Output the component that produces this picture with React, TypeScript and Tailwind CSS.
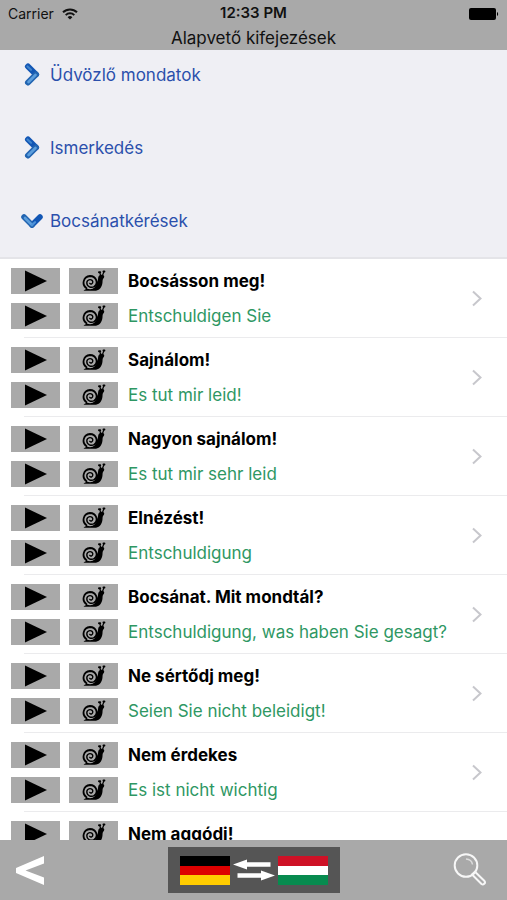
import React, { useState } from 'react';

interface Phrase {
    source: string;
    target: string;
}

interface Section {
    title: string;
    phrases: Phrase[];
}

const SECTIONS: Section[] = [
    { title: 'Üdvözlő mondatok', phrases: [] },
    { title: 'Ismerkedés', phrases: [] },
    {
        title: 'Bocsánatkérések',
        phrases: [
            { source: 'Bocsásson meg!', target: 'Entschuldigen Sie' },
            { source: 'Sajnálom!', target: 'Es tut mir leid!' },
            { source: 'Nagyon sajnálom!', target: 'Es tut mir sehr leid' },
            { source: 'Elnézést!', target: 'Entschuldigung' },
            { source: 'Bocsánat. Mit mondtál?', target: 'Entschuldigung, was haben Sie gesagt?' },
            { source: 'Ne sértődj meg!', target: 'Seien Sie nicht beleidigt!' },
            { source: 'Nem érdekes', target: 'Es ist nicht wichtig' },
            { source: 'Nem aggódj!', target: '' },
        ],
    },
];

const WifiIcon = () => (
    <svg width="16" height="12" viewBox="0 0 16 12" fill="none" stroke="#111" strokeWidth="2" aria-hidden="true">
        <path d="M1 4.3a10 10 0 0 1 14 0" />
        <path d="M3.7 7.1a6.2 6.2 0 0 1 8.6 0" />
        <path d="M8 11.6L5.6 9.2a3.4 3.4 0 0 1 4.8 0z" fill="#111" stroke="none" />
    </svg>
);

const BatteryIcon = () => (
    <svg width="30" height="12" viewBox="0 0 30 12" aria-hidden="true">
        <rect x="0" y="0" width="27" height="12" rx="2" />
        <path d="M28 4a2.3 2.3 0 0 1 0 4z" />
    </svg>
);

const SectionArrow = ({ open }: { open: boolean }) => (
    <svg width="24" height="24" viewBox="0 0 24 24" fill="none" strokeLinecap="round" aria-hidden="true">
        {open ? (
            <>
                <path d="M20 8L12 16" stroke="#1256b4" strokeWidth="5.5" />
                <path d="M4 8l8 8" stroke="#2264b0" strokeWidth="5.5" />
                <path d="M5 9l7 7" stroke="#5c9edc" strokeWidth="2.6" />
                <path d="M12 16l3-2.8" stroke="#4d92d8" strokeWidth="2.2" />
            </>
        ) : (
            <>
                <path d="M8 3.500l8 8" stroke="#1256b4" strokeWidth="6" />
                <path d="M16 11.500l-8 8" stroke="#2264b0" strokeWidth="6" />
                <path d="M7.500 3.500l3.500 3.200" stroke="#3f84cc" strokeWidth="2.2" />
                <path d="M15.500 12l-7 7" stroke="#5c9edc" strokeWidth="2.6" />
            </>
        )}
    </svg>
);

const SnailIcon = () => (
    <svg width="24" height="22" viewBox="0 0 24 22" fill="none" stroke="#000" strokeLinecap="round" aria-hidden="true">
        {/* body */}
        <path
            d="M1.500 20.800c1.500-1.600 3.500-2 6-2.200L13 14c1.800-1.200 2.700-2.600 3-4.800.2-1.800.4-3.300 1.600-4 1.300-.7 3.600-.5 4.400.6.700 1.200-.3 2.200-1 3.200-.7 1.300-.2 3-.8 5.200-.8 3.700-3.400 6.600-7.700 6.600z"
            fill="#000"
            stroke="none"
        />
        {/* horns */}
        <path d="M18.600 5.500l-.8-3M20.500 5.500l1.200-3.300" strokeWidth="1.200" />
        <path d="M17 2.200h1.200M21.500 1.600h.9" strokeWidth="2" />
        {/* shell */}
        <circle cx="8" cy="12.500" r="6.800" fill="#a9a9a9" stroke="none" />
        <path d="M4.500 18.200C-.5 15 1 6.500 8 6c6.500 0 8.500 7.500 4.500 10.500" strokeWidth="1.800" />
        <path d="M12.500 16.500c-3.500 2-7.700 0-7.700-3.800.2-3.600 5.700-4.300 6-.8.1 1.900-2 2.700-3 1.500" strokeWidth="1.400" />
    </svg>
);

const AudioButtons = ({ text, lang }: { text: string; lang: string }) => (
    <div className="flex gap-[9px]">
        <button
            type="button"
            lang={lang}
            aria-label={`Lejátszás: ${text}`}
            className="flex h-[26px] w-[49px] items-center justify-center bg-[#a9a9a9]"
        >
            <svg width="22" height="22" viewBox="0 0 22 22" aria-hidden="true">
                <path d="M0 .5L22 11 0 21.500z" />
            </svg>
        </button>
        <button
            type="button"
            lang={lang}
            aria-label={`Lassú lejátszás: ${text}`}
            className="flex h-[26px] w-[49px] items-center justify-center bg-[#a9a9a9]"
        >
            <SnailIcon />
        </button>
    </div>
);

const PhraseRow = ({ phrase }: { phrase: Phrase }) => (
    <li className="flex shrink-0 flex-col">
        <div className="flex items-center pt-[9px] pr-6 pb-2 pl-[11px]">
            <div className="flex min-w-0 flex-1 flex-col gap-[9px]">
                <div className="flex items-center gap-[10px]">
                    <AudioButtons text={phrase.source} lang="hu" />
                    <span className="text-[17px] leading-[26px] font-bold whitespace-nowrap text-black">{phrase.source}</span>
                </div>
                <div className="flex items-center gap-[10px]">
                    <AudioButtons text={phrase.target} lang="de" />
                    <span className="text-[17px] leading-[26px] whitespace-nowrap text-[#2e9763]">{phrase.target}</span>
                </div>
            </div>
            <button type="button" aria-label={`Részletek: ${phrase.source}`}>
                <svg width="12" height="18" viewBox="0 0 12 18" fill="none" stroke="#c7c7cc" strokeWidth="2" aria-hidden="true">
                    <path d="M2 1.500L9.500 8.500 2 15.500" />
                </svg>
            </button>
        </div>
        <div className="ml-6 h-px bg-[#ebebed]" />
    </li>
);

const FlagDe = () => (
    <svg width="50" height="29" viewBox="0 0 50 29" aria-hidden="true">
        <rect width="50" height="29" fill="#fc0" />
        <rect width="50" height="19" fill="#d00" />
        <rect width="50" height="10" fill="#000" />
    </svg>
);

const FlagHu = () => (
    <svg width="50" height="29" viewBox="0 0 50 29" aria-hidden="true">
        <rect width="50" height="29" fill="#078b4f" />
        <rect width="50" height="19" fill="#fff" />
        <rect width="50" height="10" fill="#ce1126" />
    </svg>
);

const SwapArrows = () => (
    <svg width="42" height="22" viewBox="0 0 42 22" fill="#fff" aria-hidden="true">
        <path d="M0 5.500L14 .5v2.800h23.500v4.400H14v2.800z" />
        <path d="M42 16.500L28 11.500v2.800H4.500v4.400H28v2.800z" />
    </svg>
);

const SearchIcon = () => (
    <svg width="34" height="34" viewBox="0 0 34 34" fill="none" stroke="#f7f7f7" strokeWidth="2" aria-hidden="true">
        <circle cx="13" cy="12.500" r="11.300" />
        <path d="M13 6c3.500.2 6 2.500 6.500 5.500" strokeWidth="1.500" stroke="#dcdcdc" />
        <path d="M19 21.500l3-2.800 9.500 9.300c1.500 2-1.200 4.500-3 3z" strokeLinejoin="round" />
    </svg>
);

export default function App() {
    const [openSection, setOpenSection] = useState<number>(2);
    const [reversed, setReversed] = useState(false);

    return (
        <div className="flex h-screen flex-col overflow-hidden bg-white font-['Inter','Liberation_Sans',sans-serif]">
            <header className="shrink-0 bg-[#a9a9a9] text-[#111]">
                <div className="grid h-[27px] grid-cols-3 items-center px-2">
                    <div className="flex items-center gap-2 text-[14px]">
                        Carrier
                        <WifiIcon />
                    </div>
                    <div className="text-center text-[15px] font-semibold">12:33 PM</div>
                    <div className="flex justify-end">
                        <BatteryIcon />
                    </div>
                </div>
                <h1 className="h-[23px] text-center text-[17px] leading-[22px]">Alapvető kifejezések</h1>
            </header>

            <main className="min-h-0 flex-1 overflow-hidden">
                {SECTIONS.map((section, index) => {
                    const open = openSection === index;
                    return (
                        <section key={section.title}>
                            <div className={open ? 'border-b-2 border-[#e4e4e8] bg-[#efeff4] pb-3' : 'bg-[#efeff4] pb-6'}>
                                <button
                                    type="button"
                                    aria-expanded={open}
                                    onClick={() => setOpenSection(open ? -1 : index)}
                                    className="flex h-[49px] w-full items-center gap-[6px] pl-5 text-[17px] text-[#2b50ac]"
                                >
                                    <SectionArrow open={open} />
                                    <span className="pt-0.5">{section.title}</span>
                                </button>
                            </div>
                            {open && (
                                <ul className="flex flex-col bg-white">
                                    {section.phrases.map(phrase => (
                                        <PhraseRow key={phrase.source} phrase={phrase} />
                                    ))}
                                </ul>
                            )}
                        </section>
                    );
                })}
            </main>

            <footer className="grid h-[60px] shrink-0 grid-cols-3 items-center bg-[#a9a9a9] px-4">
                <button type="button" aria-label="Vissza" className="justify-self-start">
                    <svg width="28" height="30" viewBox="0 0 28 30" fill="#fff" aria-hidden="true">
                        <path d="M28 1v7.500L9.500 15.500l18.500 7V30L0 18v-5z" />
                    </svg>
                </button>
                <button
                    type="button"
                    aria-label="Nyelvek cseréje"
                    onClick={() => setReversed(!reversed)}
                    className="flex h-[46px] items-center gap-[3px] justify-self-center bg-[#555] px-3"
                >
                    {reversed ? <FlagHu /> : <FlagDe />}
                    <SwapArrows />
                    {reversed ? <FlagDe /> : <FlagHu />}
                </button>
                <button type="button" aria-label="Keresés" className="justify-self-end pr-1">
                    <SearchIcon />
                </button>
            </footer>
        </div>
    );
}
